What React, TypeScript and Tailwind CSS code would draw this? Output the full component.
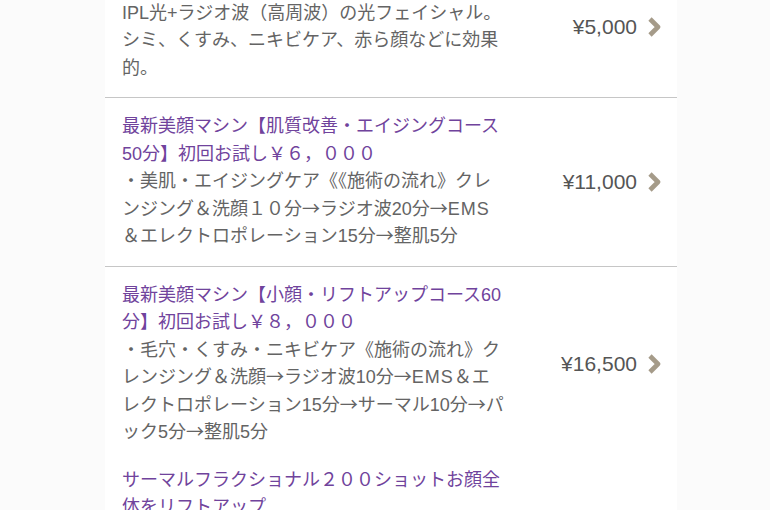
type Menu = {
  title?: string;
  body?: string;
  price?: string;
};

const menus: Menu[] = [
  {
    title: "フォトフェイシャル【初回お試し】",
    body: "IPL光+ラジオ波（高周波）の光フェイシャル。シミ、くすみ、ニキビケア、赤ら顔などに効果的。",
    price: "¥5,000",
  },
  {
    title: "最新美顔マシン【肌質改善・エイジングコース50分】初回お試し￥６，０００",
    body: "・美肌・エイジングケア《《施術の流れ》クレンジング＆洗顔１０分→ラジオ波20分→EMS＆エレクトロポレーション15分→整肌5分",
    price: "¥11,000",
  },
  {
    title: "最新美顔マシン【小顔・リフトアップコース60分】初回お試し￥８，０００",
    body: "・毛穴・くすみ・ニキビケア《施術の流れ》クレンジング＆洗顔→ラジオ波10分→EMS＆エレクトロポレーション15分→サーマル10分→パック5分→整肌5分",
    price: "¥16,500",
  },
];

// arrows are full width in the shot, so take them from the CJK font;
// EMS is a touch wider there too
const renderBody = (text: string) =>
  text.split(/(→|EMS)/).map((part, i) => {
    if (part === "→")
      return (
        <span key={i} className="font-['Noto_Sans_CJK_JP',sans-serif] leading-[0]">
          →
        </span>
      );
    if (part === "EMS")
      return (
        <span key={i} className="tracking-[1px]">
          EMS
        </span>
      );
    return <span key={i}>{part}</span>;
  });

const Chevron = () => (
  <svg width="14" height="22" viewBox="0 0 14 22" className="shrink-0">
    <polyline
      points="3,3 11,11 3,19"
      fill="none"
      stroke="#a59b89"
      strokeWidth="4.6"
      strokeLinejoin="round"
    />
  </svg>
);

const MenuRow = ({ title, body, price, divider = true }: Menu & { divider?: boolean }) => (
  <div
    className={`flex items-center pl-[17px] pr-[16px] pt-[15px] pb-[15px] ${
      divider ? "border-b-[1.5px] border-[#c6c6c6]" : ""
    }`}
  >
    <div className="w-[384.5px] text-[18px] leading-[27.5px]">
      {title && <p className="text-[#70439c]">{title}</p>}
      {body && <p className="text-[#646464]">{renderBody(body)}</p>}
    </div>
    {price && (
      <div className="flex flex-1 items-center justify-end gap-[10px]">
        <span className="text-[21px] text-[#555555] font-['Liberation_Sans',sans-serif]">
          {price}
        </span>
        <Chevron />
      </div>
    )}
  </div>
);

export default function App() {
  return (
    <div className="h-[510px] w-[770px] overflow-hidden bg-[#fbfbfb] font-['Liberation_Sans','Noto_Sans_CJK_JP',sans-serif]">
      <div className="ml-[105px] mt-[-43px] w-[572px] bg-white">
        {menus.map((m, i) => (
          <MenuRow key={i} {...m} divider={i < 2} />
        ))}
        <div className="pl-[17px] pr-[16px] pt-[5px] pb-[16px]">
          <div className="w-[384.5px] text-[18px] leading-[27.5px]">
            <p className="text-[#70439c]">
              サーマルフラクショナル２００ショットお顔全体をリフトアップ
            </p>
            <p className="text-[#646464]">
              ・たるみ・しわ・毛穴ケア《施術の流れ》クレンジング＆洗顔
            </p>
          </div>
        </div>
      </div>
    </div>
  );
}
